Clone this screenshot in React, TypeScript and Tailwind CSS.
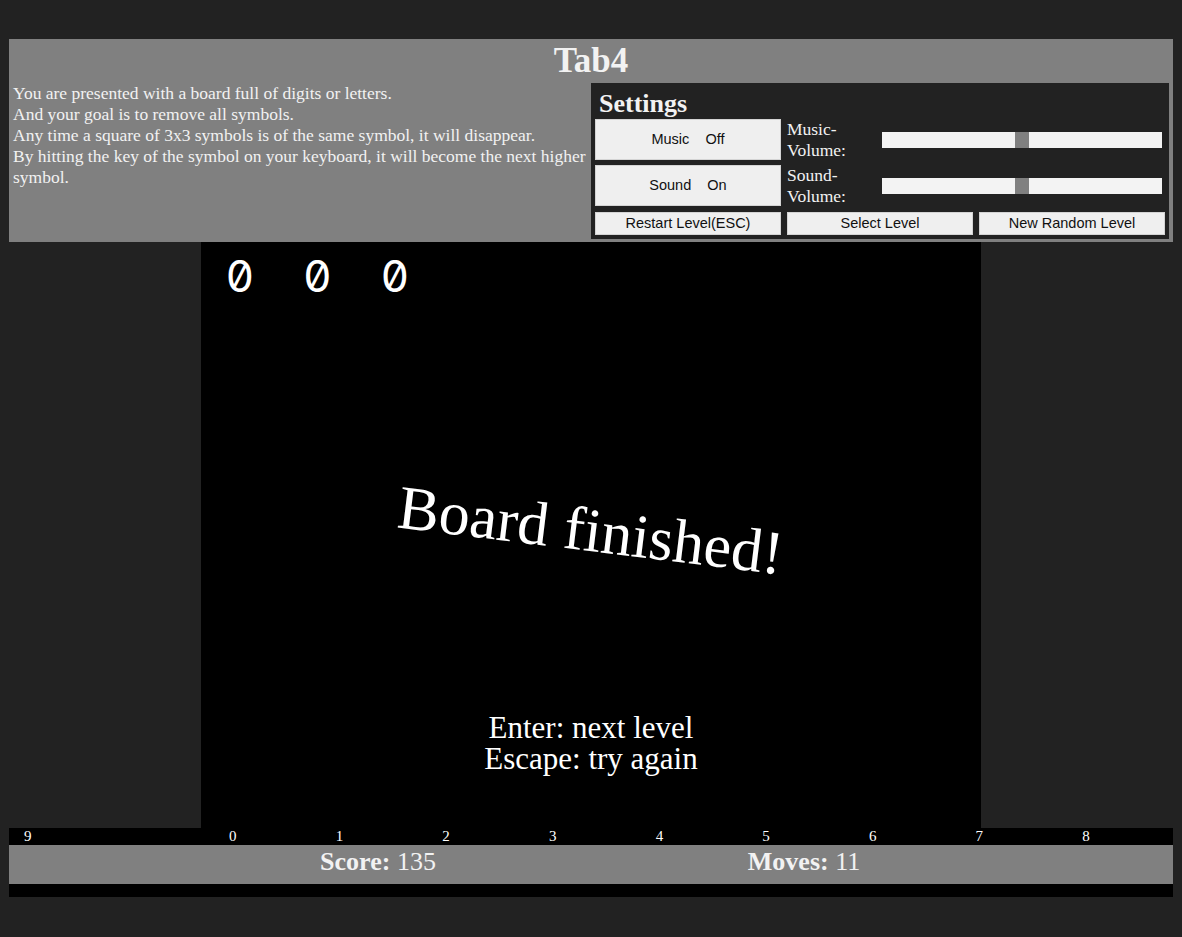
const serif = { fontFamily: '"Liberation Serif", "Times New Roman", serif' }

function Slider({ pos }: { pos: number }) {
  return (
    <div className="relative h-[16px] w-[280px] bg-[#f3f3f3]">
      <div className="absolute top-0 h-[16px] w-[14px] bg-[#808080]" style={{ left: pos }} />
    </div>
  )
}

function Btn({ children, tall = false }: { children: React.ReactNode; tall?: boolean }) {
  return (
    <button
      className={[
        "w-[186px] bg-[#efefef] border border-[#d4d4d4] text-[#111] text-[14.5px] whitespace-pre font-['Liberation_Sans',Arial,sans-serif]",
        tall ? "h-[41px]" : "h-[23px] leading-[21px]",
      ].join(" ")}
    >
      {children}
    </button>
  )
}

export default function App() {
  const cols = ["0", "1", "2", "3", "4", "5", "6", "7"]
  return (
    <div className="min-h-[937px] bg-[#222222] pt-[39px] px-[9px] text-[#f2f2f2]" style={serif}>
      {/* header panel */}
      <div className="bg-[#808080] h-[203px]">
        <h1 className="text-center font-bold text-[35px] leading-[44px] h-[44px]">Tab4</h1>
        <div className="flex">
          <div className="w-[582px] pl-[4px] text-[17.5px] leading-[21px]">
            You are presented with a board full of digits or letters.
            <br />
            And your goal is to remove all symbols.
            <br />
            Any time a square of 3x3 symbols is of the same symbol, it will disappear.
            <br />
            By hitting the key of the symbol on your keyboard, it will become the next higher symbol.
          </div>
          <div className="w-[578px] h-[156px] bg-[#222222] pl-[4px]">
            <h2 className="pl-[4px] pt-[6px] font-bold text-[26px] leading-[30px] h-[36px]">Settings</h2>
            <div className="flex flex-col gap-[5px]">
              <div className="flex items-center h-[41px]">
                <Btn tall>{"Music    Off"}</Btn>
                <div className="ml-[6px] w-[95px] text-[17.5px] leading-[21px]">
                  Music-
                  <br />
                  Volume:
                </div>
                <Slider pos={133} />
              </div>
              <div className="flex items-center h-[41px]">
                <Btn tall>{"Sound    On"}</Btn>
                <div className="ml-[6px] w-[95px] text-[17.5px] leading-[21px]">
                  Sound-
                  <br />
                  Volume:
                </div>
                <Slider pos={133} />
              </div>
              <div className="flex gap-[6px] mt-[1px]">
                <Btn>Restart Level(ESC)</Btn>
                <Btn>Select Level</Btn>
                <Btn>New Random Level</Btn>
              </div>
            </div>
          </div>
        </div>
      </div>

      {/* board */}
      <div className="mx-auto w-[780px] h-[586px] bg-black flex flex-col items-stretch">
        <div className="pt-[12px] flex text-[44px] leading-[44px] text-white font-['Inter',sans-serif] [font-feature-settings:'zero']">
          <span className="w-[78px] text-center">0</span>
          <span className="w-[77px] text-center">0</span>
          <span className="w-[78px] text-center">0</span>
        </div>
        <div className="mt-[197px] h-[70px] flex items-center justify-center">
          <span className="text-[62px] leading-[70px] text-white rotate-[7deg] inline-block">Board finished!</span>
        </div>
        <div className="mt-[147px] text-center text-[31px] leading-[31px] text-white">
          Enter: next level
          <br />
          Escape: try again
        </div>
      </div>

      {/* column labels */}
      <div className="flex h-[17px] bg-black text-white text-[15px] leading-[17px]">
        <div className="w-[220px] shrink-0 pl-[15px]">9</div>
        {cols.map((c) => (
          <div key={c} className="w-[106.67px] shrink-0">
            {c}
          </div>
        ))}
        <div className="flex-1">8</div>
      </div>

      {/* score bar */}
      <div className="flex justify-center h-[39px] bg-[#808080] text-[26px] leading-[34px]">
        <div className="w-[426px] text-center">
          <b>Score:</b> 135
        </div>
        <div className="w-[426px] text-center">
          <b>Moves:</b> 11
        </div>
      </div>
      <div className="h-[13px] bg-black" />
    </div>
  )
}
